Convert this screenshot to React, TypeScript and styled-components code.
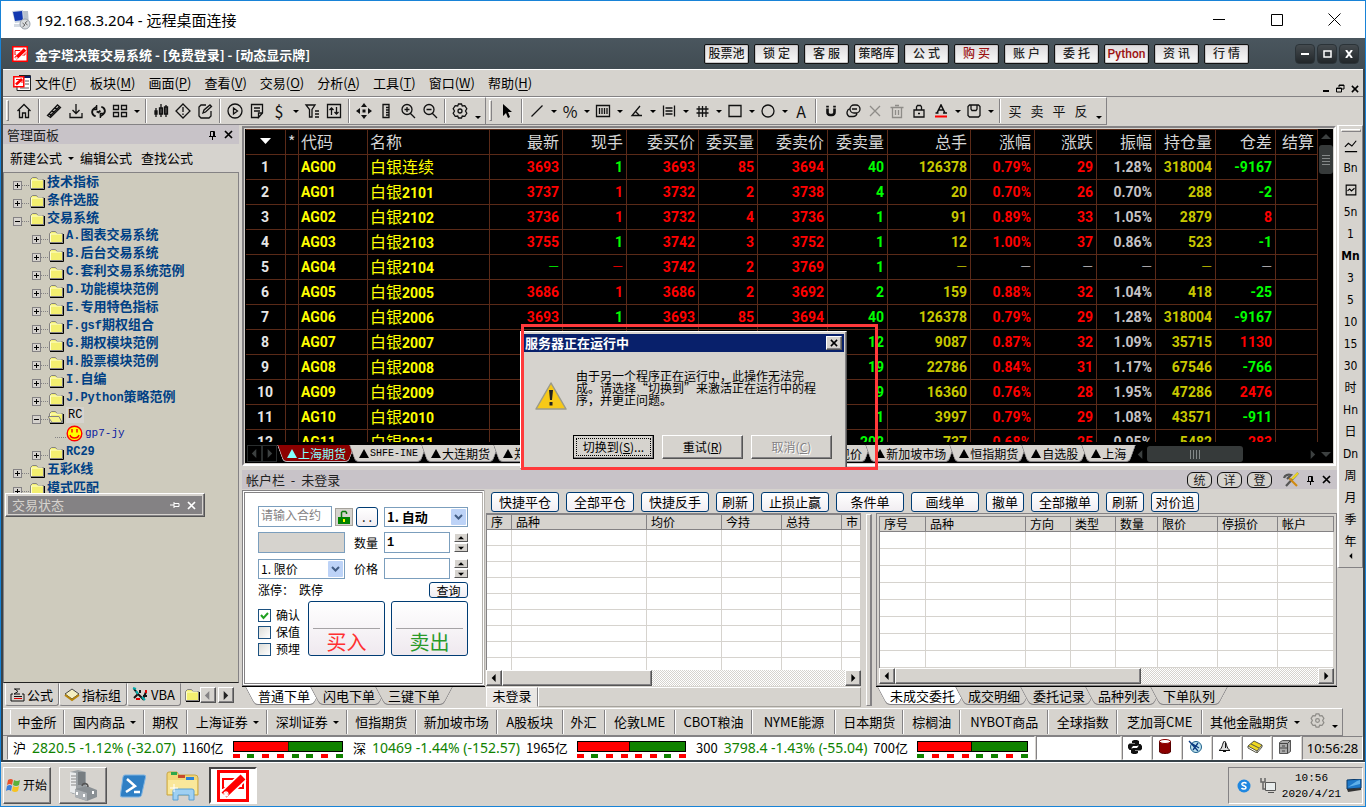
import React from 'react';
import styled, { createGlobalStyle, css } from 'styled-components';

const face = '#d6d3ce';
const cjk = '"Noto Sans CJK SC", sans-serif';

const GlobalStyle = createGlobalStyle`
  *, *::before, *::after { box-sizing: border-box; }
  body {
    margin: 0;
    background: ${face};
    color: #000;
    font: 13px/16px "Noto Sans", ${cjk};
  }
  button, input, select { font: inherit; color: inherit; margin: 0; }
  button { cursor: default; white-space: nowrap; }
  svg { display: block; flex: none; }
`;

const raised = css`
  border: 1px solid;
  border-color: #fff #555 #555 #fff;
  box-shadow: inset -1px -1px #848284;
  background: ${face};
`;
const sunken = css`
  border: 1px solid;
  border-color: #848284 #fff #fff #848284;
`;

/* ---------- window frame ---------- */
const Window = styled.div`
  position: relative;
  display: flex;
  flex-direction: column;
  height: 100vh;
  min-height: 700px;
  border: 1px solid #1883d7;
  overflow: hidden;
`;
const RemoteBar = styled.header`
  display: flex;
  align-items: center;
  flex: none;
  height: 37px;
  padding: 0 4px 0 10px;
  gap: 5px;
  background: #fff;
  font-size: 15px;
  line-height: 20px;
`;
const Grow = styled.div`flex: 1;`;
const RemoteButton = styled.button`
  display: flex;
  align-items: center;
  justify-content: center;
  width: 53px;
  height: 36px;
  border: 0;
  padding: 0;
  background: none;
`;
const AppBar = styled.div`
  display: flex;
  align-items: center;
  flex: none;
  height: 31px;
  padding: 0 6px 0 11px;
  background: linear-gradient(#4a565e, #414c53);
  color: #fff;
  font: bold 13px/16px ${cjk};
`;
const AppTitle = styled.h1`
  flex: 1;
  margin: 2px 0 0 7px;
  font: inherit;
  white-space: nowrap;
`;
const TopButtons = styled.nav`
  display: flex;
  gap: 5px;
  margin-right: 46px;
`;
const TopButton = styled.button<{ $red?: boolean }>`
  width: 45px;
  height: 20px;
  padding: 0;
  border: 1px solid #111;
  border-radius: 2px;
  background: linear-gradient(#dcdadc, #fafafa);
  box-shadow: inset 0 0 0 1px #c9c6c9;
  color: ${(p) => (p.$red ? '#9c1010' : '#222')};
  font: 500 12px/16px Roboto, ${cjk};
`;
const FrameButtons = styled.div`
  display: flex;
  gap: 2px;
`;
const FrameButton = styled.button`
  display: flex;
  align-items: center;
  justify-content: center;
  width: 20px;
  height: 20px;
  padding: 0;
  border: 1px solid #2b3338;
  border-radius: 4px;
  background: linear-gradient(#454b4f, #22272a);
`;
const AppBody = styled.div`
  flex: 1;
  min-height: 0;
  display: flex;
  flex-direction: column;
  border: solid #38434a;
  border-width: 0 2px 2px;
  background: ${face};
`;

/* ---------- menu and tool bars ---------- */
const MenuBar = styled.nav`
  display: flex;
  align-items: center;
  flex: none;
  height: 28px;
  gap: 4px;
  padding: 0 4px 0 10px;
  border-top: 1px solid #fff;
  border-bottom: 1px solid #848284;
  font-family: ${cjk};
`;
const MenuList = styled.div`
  display: flex;
  gap: 13px;
`;
const MenuItem = styled.button`
  padding: 0;
  border: 0;
  background: none;
  u { text-underline-offset: 2px; }
`;
const MdiButtons = styled.div`
  display: flex;
  align-self: flex-end;
  gap: 6px;
  padding-bottom: 3px;
`;
const Bare = styled.button`
  display: flex;
  align-items: center;
  justify-content: center;
  padding: 0;
  border: 0;
  background: none;
`;
const ToolBar = styled.div`
  display: flex;
  align-items: stretch;
  flex: none;
  height: 28px;
`;
const ToolGroup = styled.div`
  display: flex;
  align-items: center;
  padding-left: 10px;
  border: solid;
  border-width: 1px 1px 1px 0;
  border-color: #fff #848284 #848284;
  position: relative;
  &::before {
    content: '';
    position: absolute;
    left: 3px;
    top: 2px;
    bottom: 3px;
    width: 3px;
    border: 1px solid;
    border-color: #fff #848284 #848284 #fff;
  }
`;
const Tool = styled.button<{ $dim?: boolean }>`
  display: flex;
  align-items: center;
  justify-content: center;
  width: 22px;
  height: 22px;
  padding: 0;
  border: 0;
  background: none;
  color: ${(p) => (p.$dim ? '#8e8c88' : '#111')};
  font: 13px/16px ${cjk};
`;
const Drop = styled.button`
  display: flex;
  align-items: center;
  justify-content: center;
  width: 11px;
  height: 22px;
  padding: 0;
  border: 0;
  background: none;
  &::after {
    content: '';
    border: 3px solid transparent;
    border-top-color: #000;
    border-bottom: 0;
  }
`;
const LowDrop = styled(Drop)`
  align-items: flex-end;
  width: 14px;
  padding-bottom: 3px;
`;
const Rule = styled.div`
  width: 8px;
  align-self: stretch;
  margin: 1px 0;
  background: linear-gradient(90deg, transparent 3px, #848284 3px, #848284 4px, #fff 4px, #fff 5px, transparent 5px);
`;

/* ---------- work area ---------- */
const Work = styled.div`
  flex: 1;
  min-height: 0;
  display: flex;
`;
const Side = styled.aside`
  position: relative;
  display: flex;
  flex-direction: column;
  flex: none;
  width: 236px;
  margin-right: 3px;
`;
const PanelTitle = styled.div`
  display: flex;
  align-items: center;
  flex: none;
  height: 19px;
  padding: 0 4px;
  background: #c8c3c8;
  color: #222;
  font-family: ${cjk};
  h2 { flex: 1; margin: 0; font: inherit; white-space: pre; }
`;
const SideActions = styled.div`
  display: flex;
  align-items: center;
  flex: none;
  height: 28px;
  padding-left: 7px;
  font-family: ${cjk};
  button + button { margin-left: 9px; }
`;
const TinyDrop = styled.span`
  width: 17px;
  margin-right: -8px;
  display: flex;
  justify-content: center;
  &::after {
    content: '';
    border: 3px solid transparent;
    border-top-color: #000;
    border-bottom: 0;
  }
`;
const Tree = styled.ul`
  flex: 1;
  min-height: 0;
  margin: 0;
  padding: 0;
  overflow: hidden;
  list-style: none;
  background: #cecbbd;
  border: 1px solid;
  border-color: #848284 #848284 #222 #848284;
`;
const TreeRow = styled.li<{ $level: number }>`
  display: flex;
  align-items: center;
  height: 18px;
  padding: 0 0 2px ${(p) => 9 + p.$level * 19}px;
  color: #004084;
  font: bold 13px/16px ${cjk};
  white-space: nowrap;
`;
const Expander = styled.button`
  display: flex;
  align-items: center;
  justify-content: center;
  width: 9px;
  height: 9px;
  margin-top: 8px;
  padding: 0;
  border: 1px solid #848284;
  background: ${face};
`;
const Dots = styled.i`
  width: 7px;
  margin-top: 8px;
  border-top: 1px dotted #848284;
`;
const LeafDots = styled(Dots)`
  width: 11px;
  margin-left: 4px;
`;
const TreeIcon = styled.span`
  margin: 4px 2px 0 0;
`;
const Mono = styled.span`
  font-family: "Liberation Mono", monospace;
  font-size: 12px;
`;
const Picked = styled.span`
  padding: 0 2px;
  background: ${face};
  color: #000;
  font: 12px/16px "Liberation Mono", monospace;
`;
const Leaf = styled.span`
  margin-left: 2px;
  color: #0a1aa0;
  font: 11px/16px "Liberation Mono", monospace;
`;
const FloatPanel = styled.section`
  position: absolute;
  left: 2px;
  bottom: 190px;
  width: 200px;
  padding: 2px;
  ${raised}
  div { background: #848284; color: ${face}; height: 18px; }
`;
const FloatHead = styled.h2`
  color: ${face};
`;
const SideTabs = styled.div`
  display: flex;
  flex: none;
  height: 24px;
  padding-left: 2px;
`;
const SideTab = styled.button`
  display: flex;
  align-items: center;
  gap: 2px;
  height: 23px;
  padding: 0 5px 0 4px;
  background: ${face};
  border: 1px solid;
  border-color: transparent #848284 #848284 #fff;
  border-radius: 0 0 3px 3px;
  font-family: ${cjk};
`;
const SideFolder = styled(Bare)`
  margin-left: 3px;
`;
const SideNudge = styled.button`
  display: flex;
  align-items: center;
  justify-content: center;
  width: 16px;
  height: 16px;
  margin: 4px 2px 0 0;
  padding: 0;
  ${raised}
`;

const Center = styled.main`
  flex: 1;
  min-width: 0;
  display: flex;
  flex-direction: column;
`;
const QuoteFrame = styled.section`
  flex: 1;
  min-height: 0;
  display: flex;
  flex-direction: column;
  margin: 1px 1px 4px 0;
  border: 2px solid;
  border-color: #848284 #fff #fff #848284;
  background: #000;
  outline: 1px solid ${face};
  outline-offset: -3px;
  padding: 1px 1px 2px 2px;
`;
const QuoteMain = styled.div`
  flex: 1;
  min-height: 0;
  display: flex;
`;
const QuoteClip = styled.div`
  flex: 1;
  min-width: 0;
  margin-bottom: 3px;
  overflow: hidden;
`;
const QuoteTable = styled.table`
  width: 100%;
  table-layout: fixed;
  border-collapse: separate;
  border-spacing: 0;
  border-top: 1px solid #5a2a18;
  th, td {
    height: 25px;
    padding: 0 3px 0 2px;
    border: solid #5a2a18;
    border-width: 0 1px 1px 0;
    overflow: hidden;
    white-space: nowrap;
    text-align: right;
    vertical-align: middle;
    font: bold 14px/20px Roboto, ${cjk};
  }
  th { font: 16px/20px ${cjk}; color: #d6d6d6; padding-bottom: 2px; }
`;
const Cell = styled.td<{ $c: string; $left?: boolean; $mid?: boolean; $thin?: boolean }>`
  &&& {
    color: ${(p) => p.$c};
    ${(p) => p.$left && 'text-align: left;'}
    ${(p) => p.$mid && 'text-align: center;'}
    ${(p) => p.$thin && 'font-weight: 300;'}
  }
`;
const Big = styled.span`
  font: 16px/20px ${cjk};
`;
const HeadCell = styled.th<{ $left?: boolean; $mid?: boolean }>`
  &&& {
    ${(p) => p.$left && 'text-align: left;'}
    ${(p) => p.$mid && 'text-align: center;'}
  }
  svg { margin: 0 auto; }
`;
const DarkScroll = styled.div<{ $row?: boolean }>`
  display: flex;
  flex-direction: ${(p) => (p.$row ? 'row' : 'column')};
  align-items: center;
  flex: ${(p) => (p.$row ? '1' : 'none')};
  ${(p) => (p.$row ? 'height: 18px; margin-left: 4px;' : 'width: 15px;')}
  background: #000;
`;
const DarkArrow = styled.button`
  display: flex;
  align-items: center;
  justify-content: center;
  width: 14px;
  height: 16px;
  padding: 0;
  border: 0;
  background: #000;
`;
const DarkThumb = styled.div<{ $row?: boolean }>`
  display: flex;
  align-items: center;
  justify-content: center;
  ${(p) => (p.$row ? 'width: 96px; height: 16px;' : 'width: 14px; height: 29px;')}
  border-radius: 3px;
  background: #363a3a;
`;
const QuoteTabs = styled.div`
  display: flex;
  flex: none;
  height: 17px;
  padding-left: 1px;
`;
const Nudge = styled.button`
  display: flex;
  align-items: center;
  justify-content: center;
  width: 15px;
  height: 17px;
  padding: 0;
  border: 1px solid #2a2e2e;
  background: #000;
`;

/* A tab that is wider at its top edge than at its bottom edge. */
const SlantTab = styled.button<{ $bg: string; $line: string; $skew: number }>`
  position: relative;
  z-index: 0;
  display: flex;
  align-items: center;
  gap: 1px;
  flex: none;
  height: 100%;
  border: 0;
  background: none;
  &::before, &::after {
    content: '';
    position: absolute;
    z-index: -1;
    top: 0;
    bottom: 0;
    width: 51%;
    background: ${(p) => p.$bg};
    border-bottom: 1px solid ${(p) => p.$line};
  }
  &::before {
    left: 0;
    border-left: 1px solid ${(p) => p.$line};
    border-bottom-left-radius: 4px;
    transform: skewX(${(p) => p.$skew}deg);
    transform-origin: top;
  }
  &::after {
    right: 0;
    border-right: 1px solid ${(p) => p.$line};
    border-bottom-right-radius: 4px;
    transform: skewX(-${(p) => p.$skew}deg);
    transform-origin: top;
  }
`;
const QuoteTab = styled(SlantTab)<{ $on?: boolean }>`
  margin-right: -6px;
  padding: 0 9px 0 10px;
  color: ${(p) => (p.$on ? '#84ffff' : '#000')};
  font: 12px/16px ${cjk};
`;
const TabMono = styled.span`
  font: 10px/16px "Liberation Mono", monospace;
`;
const Strip = styled.div`
  flex: none;
  width: 26px;
  height: 443px;
  display: flex;
  flex-direction: column;
  align-items: center;
  padding-top: 9px;
  border: solid;
  border-width: 1px 1px 1px 2px;
  border-color: #fff #848284 #848284 #fff;
  &::before {
    content: '';
    position: absolute;
    width: 20px;
    height: 3px;
    margin-top: -6px;
    border: 1px solid;
    border-color: #fff #848284 #848284 #fff;
  }
`;
const StripButton = styled.button<{ $bold?: boolean }>`
  display: flex;
  align-items: center;
  justify-content: center;
  width: 22px;
  height: 22px;
  padding: 0;
  border: 0;
  background: none;
  font: ${(p) => (p.$bold ? 'bold' : 'normal')} 12px/16px "DejaVu Sans Condensed", ${cjk};
`;

/* ---------- account panel ---------- */
const Pill = styled.button`
  width: 25px;
  height: 16px;
  margin-right: 5px;
  padding: 0;
  border: 1px solid #111;
  border-radius: 6px;
  background: ${face};
  font: 12px/13px ${cjk};
`;
const TitleIcons = styled.div`
  display: flex;
  align-items: center;
  gap: 7px;
  padding: 0 2px 0 6px;
`;
const Lower = styled.div`
  display: flex;
  flex: none;
  height: 218px;
`;
const FormColumn = styled.div`
  display: flex;
  flex-direction: column;
  flex: none;
  width: 243px;
  padding-top: 1px;
`;
const OrderForm = styled.form`
  flex: 1;
  display: flex;
  flex-direction: column;
  gap: 5px;
  margin: 0;
  padding: 13px 14px 0 13px;
  background: #fff;
  border: 3px double #848284;
  border-right-color: #b5b2ad;
  font: 12px/16px ${cjk};
`;
const FormRow = styled.div`
  display: flex;
  align-items: center;
  height: 21px;
`;
const LimitRow = styled(FormRow)`
  gap: 5px;
  height: 12px;
`;
const Field = styled.input<{ $w: number; $bold?: boolean }>`
  width: ${(p) => p.$w}px;
  height: 21px;
  padding: 0 2px;
  border: 1px solid #7b9ebd;
  background: #fff;
  font: ${(p) => (p.$bold ? 'bold' : 'normal')} 12px/16px "Liberation Mono", ${cjk};
  &:disabled { background: ${face}; }
  &::placeholder { color: #848284; opacity: 1; }
`;
const FormLabel = styled.label`
  width: 30px;
  margin-left: 9px;
`;
const Pick = styled.span<{ $w: number }>`
  position: relative;
  width: ${(p) => p.$w}px;
  height: 20px;
  select {
    width: 100%;
    height: 20px;
    padding: 0 2px;
    border: 1px solid #7b9ebd;
    border-radius: 0;
    background: #fff;
    appearance: none;
    font: inherit;
  }
  svg { position: absolute; right: 2px; top: 2px; pointer-events: none; }
`;
const BoldPick = styled(Pick)`
  margin-left: auto;
  select { font: bold 13px/16px ${cjk}; }
`;
const LockButton = styled.button`
  display: flex;
  align-items: center;
  justify-content: center;
  width: 18px;
  height: 18px;
  margin: 0 3px;
  padding: 0;
  border: 1px solid #a5a29c;
  background: ${face};
`;
const Soft = styled.button<{ $w?: number; $h?: number }>`
  width: ${(p) => (p.$w ? `${p.$w}px` : 'auto')};
  height: ${(p) => p.$h || 20}px;
  padding: 0;
  border: 1px solid #003c74;
  border-radius: 3px;
  background: linear-gradient(#fff, #f1edf1);
  font: 13px/16px ${cjk};
`;
const Small = styled.span`
  display: block;
  font-size: 12px;
  line-height: 13px;
`;
const Spin = styled.span`
  display: flex;
  flex-direction: column;
  gap: 1px;
  margin-left: auto;
  button {
    display: flex;
    align-items: center;
    justify-content: center;
    width: 14px;
    height: 9px;
    padding: 0;
    ${raised}
    box-shadow: none;
  }
`;
const Checks = styled.div`
  display: flex;
  flex-direction: column;
  gap: 1px;
  width: 50px;
  padding-top: 6px;
  label { display: flex; align-items: center; gap: 5px; height: 16px; }
  input {
    appearance: none;
    width: 13px;
    height: 13px;
    border: 1px solid #1c5180;
    background: linear-gradient(135deg, #dcdcd7, #fff);
  }
  input:checked {
    background: #fff url("data:image/svg+xml,%3Csvg xmlns='http://www.w3.org/2000/svg' viewBox='0 0 11 11'%3E%3Cpath d='M2 5l2.5 3L9 3' fill='none' stroke='%2321a121' stroke-width='2'/%3E%3C/svg%3E");
  }
`;
const TradeRow = styled.div`
  display: flex;
  button + button { margin-left: 6px; }
`;
const TradeButton = styled.button<{ $c: string }>`
  width: 77px;
  height: 55px;
  padding: 26px 4px 0;
  border: 1px solid #003c74;
  border-radius: 3px;
  background: linear-gradient(#fff, #efe9ef);
  color: ${(p) => p.$c};
  font: 20px/26px ${cjk};
  span { display: block; border-top: 1px solid #a5a2a5; }
`;
const BottomTabs = styled.div<{ $inset: number }>`
  display: flex;
  flex: none;
  height: 21px;
  padding: 0 0 2px ${(p) => p.$inset}px;
  border-top: 1px solid #000;
`;
const BottomTab = styled(SlantTab)`
  margin-right: -13px;
  padding: 0 13px;
  font: 13px/16px ${cjk};
`;
const OrderTools = styled.div`
  display: flex;
  flex: none;
  gap: 7px;
  height: 24px;
  padding: 3px 0 0 5px;
`;
const Desk = styled.div`
  flex: 1;
  min-width: 0;
  display: flex;
  flex-direction: column;
  padding-left: 1px;
`;
const Books = styled.div`
  flex: 1;
  min-height: 0;
  display: flex;
`;
const Book = styled.div<{ $fixed?: number }>`
  display: flex;
  flex-direction: column;
  min-width: 0;
  flex: ${(p) => (p.$fixed ? `0 0 ${p.$fixed}px` : '1')};
`;
const BookFrame = styled.div<{ $deep?: boolean }>`
  flex: 1;
  min-height: 0;
  display: flex;
  flex-direction: column;
  border: solid #848284;
  border-width: ${(p) => (p.$deep ? '1px' : '1px 0 0')};
  padding: ${(p) => (p.$deep ? '2px 2px 1px' : '0')};
`;
const BookClip = styled.div`
  flex: 1;
  min-height: 0;
  overflow: hidden;
  background: #fff;
  border: solid #848284;
  border-width: 1px 0 0 1px;
`;
const BookTable = styled.table<{ $pitch: number }>`
  width: 100%;
  table-layout: fixed;
  border-collapse: separate;
  border-spacing: 0;
  font: 12px/14px ${cjk};
  th {
    height: 15px;
    padding: 0 0 0 4px;
    overflow: hidden;
    text-align: left;
    font-weight: normal;
    white-space: nowrap;
    background: ${face};
    border: solid #848284;
    border-width: 0 1px 1px 0;
  }
  td {
    height: ${(p) => p.$pitch}px;
    padding: 0;
    border: solid ${face};
    border-width: 0 1px 1px 0;
  }
`;
const ClassicScroll = styled.div`
  display: flex;
  flex: none;
  height: 16px;
  background: repeating-conic-gradient(#fff 0 25%, ${face} 0 50%) 0 0 / 2px 2px;
`;
const ScrollEnd = styled.button`
  display: flex;
  align-items: center;
  justify-content: center;
  width: 16px;
  height: 16px;
  padding: 0;
  ${raised}
`;
const ScrollThumb = styled.div<{ $share: number }>`
  flex: 0 0 ${(p) => p.$share}%;
  ${raised}
`;
const Splitter = styled.div`
  flex: none;
  width: 6px;
  margin: 1px 4px 1px 5px;
  border: 1px solid;
  border-color: #fff #848284 #848284 #fff;
  border-right-width: 2px;
`;
const LoginRow = styled.div`
  display: flex;
  flex: none;
  height: 21px;
  padding-top: 1px;
  font: 13px/16px ${cjk};
`;
const LoginTab = styled.button`
  width: 52px;
  padding: 0 0 3px;
  border: 1px solid;
  border-color: #fff #848284 transparent #fff;
  background: #e9e6e3;
`;
const LoginWell = styled.div`
  flex: 1;
  border: 1px solid;
  border-color: #fff #a5a29c #a5a29c #fff;
`;

/* ---------- market bar, status bar, task bar ---------- */
const MarketBar = styled.div`
  display: flex;
  flex: none;
  width: 1340px;
  max-width: 100%;
  height: 28px;
  margin-top: 1px;
  padding-left: 7px;
  border: solid;
  border-width: 1px 1px 1px 0;
  border-color: #fff #848284 #848284;
  font-family: ${cjk};
`;
const Market = styled.button<{ $w: number }>`
  display: flex;
  align-items: center;
  justify-content: center;
  flex: 0 1 ${(p) => p.$w}px;
  min-width: 0;
  margin: 1px 0;
  padding: 0;
  border: solid;
  border-width: 0 1px;
  border-color: transparent #848284 transparent #fff;
  background: none;
`;
const MarketDrop = styled(TinyDrop)`
  margin-right: -7px;
`;
const LastMarket = styled(Market).attrs({ $w: 104 })`
  border-right-color: transparent;
`;
const StatusBar = styled.footer`
  display: flex;
  flex: none;
  height: 24px;
  gap: 1px;
  padding: 0 0 0 4px;
`;
const StatusWell = styled.div<{ $w?: number }>`
  display: flex;
  align-items: center;
  flex: ${(p) => (p.$w ? `0 0 ${p.$w}px` : '1')};
  min-width: 0;
  overflow: hidden;
  background: #fff;
  ${sunken}
`;
const IndexItem = styled.div<{ $w: number }>`
  display: flex;
  align-items: center;
  flex: 0 0 ${(p) => p.$w}px;
  gap: 6px;
  padding: 0 5px;
  white-space: nowrap;
`;
const IndexQuote = styled.span`
  color: #108200;
  font-size: 14px;
`;
const Amount = styled.span`
  font: 13px/16px ${cjk};
`;
const Meter = styled.div`
  flex: 1;
  padding: 3px 0 0 3px;
`;
const MeterBar = styled.div<{ $red: number }>`
  height: 11px;
  border: 1px solid #000;
  background: linear-gradient(90deg, #f00 ${(p) => p.$red}%, #000 ${(p) => p.$red}%, #108200 ${(p) => p.$red + 1}%);
`;
const Ticks = styled.div`
  display: flex;
  justify-content: space-between;
  margin-top: 2px;
`;
const Tick = styled.i<{ $up: boolean }>`
  width: 7px;
  height: 4px;
  background: ${(p) => (p.$up ? '#f00' : '#108200')};
`;
const StatusIcon = styled.button`
  display: flex;
  align-items: center;
  justify-content: center;
  width: 29px;
  padding: 0 4px 3px 0;
  background: #fff;
  ${sunken}
`;
const Clock = styled.time`
  display: flex;
  align-items: center;
  justify-content: center;
  width: 61px;
  ${sunken}
  font-size: 13px;
`;
const TaskBar = styled.footer`
  display: flex;
  align-items: stretch;
  flex: none;
  height: 44px;
  padding: 4px 2px 2px;
  background: ${face};
  border-top: 1px solid #fff;
`;
const StartButton = styled.button`
  display: flex;
  align-items: center;
  gap: 1px;
  width: 48px;
  padding: 0 2px 2px;
  ${raised}
  font: 12px/16px ${cjk};
`;
const Task = styled.button<{ $look?: 'up' | 'down' }>`
  display: flex;
  align-items: center;
  justify-content: center;
  width: 48px;
  margin-left: 2px;
  padding: 0;
  border: 0;
  background: none;
  ${(p) => p.$look === 'up' && raised}
  ${(p) => p.$look === 'down' && css`${sunken} border-width: 2px; border-left-color: #444; border-top-color: #444; background: #fff;`}
`;
const FirstTask = styled(Task)`
  margin-left: 8px;
`;
const Tray = styled.div`
  display: flex;
  align-items: center;
  width: 135px;
  padding-left: 8px;
  ${sunken}
  time {
    flex: 1;
    text-align: center;
    font: 11px/16px "Liberation Mono", monospace;
  }
`;
const TrayNet = styled.svg`
  margin-left: 9px;
`;

/* ---------- dialog ---------- */
const Highlight = styled.div`
  position: absolute;
  left: 520px;
  top: 323px;
  width: 357px;
  height: 146px;
  border: 3px solid #ff393b;
  pointer-events: none;
`;
const Dialog = styled.section`
  position: absolute;
  left: 519px;
  top: 330px;
  width: 327px;
  height: 138px;
  padding: 2px;
  background: ${face};
  ${raised}
`;
const DialogTitle = styled.div`
  display: flex;
  align-items: center;
  height: 18px;
  padding: 0 2px;
  background: #08206b;
  color: #fff;
  h2 { flex: 1; margin: 0; font: bold 13px/16px ${cjk}; }
`;
const DialogClose = styled.button`
  display: flex;
  align-items: center;
  justify-content: center;
  width: 16px;
  height: 14px;
  padding: 0;
  ${raised}
`;
const DialogBody = styled.div`
  display: flex;
  gap: 9px;
  padding: 18px 0 0 12px;
  p { margin: 0; font: 12px/12px ${cjk}; white-space: nowrap; }
  svg { margin-top: 12px; }
`;
const DialogButtons = styled.div`
  display: flex;
  justify-content: flex-end;
  gap: 8px;
  margin: 25px 12px 0 0;
`;
const DialogButton = styled.button<{ $main?: boolean }>`
  width: 81px;
  height: 24px;
  padding: 0;
  ${raised}
  font: 12px/16px ${cjk};
  ${(p) => p.$main && 'outline: 1px dotted #000; outline-offset: -4px; border-color: #000;'}
  &:disabled { color: #848284; text-shadow: 1px 1px #fff; }
`;

/* ---------- drawings ---------- */
const strokes: Record<string, string> = {
  home: 'M1.500 8L8 1.500 14.500 8M3.500 7v7.500h3V10h3v4.500h3V7',
  pencil: 'M1.500 12.500l10-10.500 3 2.500-10 10zM4 13l9-9M3 10l2 3M6 7l2 3M9 4l2 3',
  down: 'M8 1v9M4.500 7L8 10.500 11.500 7M2 10v4.500h12V10',
  grid: 'M1.500 2.500h5v4h-5zM9.500 2.500h5v4h-5zM1.500 9.500h5v4h-5zM9.500 9.500h5v4h-5z',
  candle: 'M3 5v9M2 8h2v3H2zM8 1v13M6.500 5h3v6h-3zM13 2v12M11.500 4h3v7h-3z',
  diamond: 'M8 1l7 7-7 7-7-7zM8 4v5M8 10.500v1.500',
  edit: 'M9 2H4L2 4v9l2 2h8l2-2V8M6 10l1-3 6-5 1.500 1.500-6 5.500z',
  play: 'M8 1a7 7 0 100 14A7 7 0 008 1zM6.500 5l4 3-4 3z',
  note: 'M13.500 10V1.500h-11v13h7zl-4 4.500V10h4M5 5h6M5 8h6',
  filter: 'M2 2h9L8 6.500V14H5.500V6.500zM11 8h4M11 11h4M11 14h4',
  updown: 'M1.500 1.500h13v13h-13zM5.500 12V5M3.500 7l2-2 2 2M10.500 4v7M8.500 9l2 2 2-2',
  ruler: 'M5 1.500h6v13H5zM8 4.500h3M8 7h3M8 9.500h3M8 12h3',
  zoomin: 'M7 1.500a5 5 0 100 10 5 5 0 000-10zM10.500 10.500L15 15M4.500 6.500h5M7 4v5',
  zoomout: 'M7 1.500a5 5 0 100 10 5 5 0 000-10zM10.500 10.500L15 15M4.500 6.500h5',
  gear: 'M6.500 1h3l.8 2 2.500-.3 2 3L13.500 8l1.300 2.300-2 3-2.500-.3-.8 2h-3l-.8-2-2.500.3-2-3L2.500 8 1.200 5.700l2-3 2.500.3zM8 6a2 2 0 100 4 2 2 0 000-4z',
  line: 'M2.500 13.500l11-11',
  hatch: 'M1.500 2.500h13v11h-13zM4.500 5v6M7 5v6M9.500 5v6M12 5v6',
  angle: 'M12 3L4 12.500h10M7 8l4 4',
  lines: 'M2.500 2.500v11M13.500 2.500v11M4.500 5h7M4.500 8h7M4.500 11h7',
  hash: 'M5 3v11M8.500 3v11M12 3v11M2.500 6h12M2.500 10h12',
  rect: 'M2 2.500h12v11H2z',
  circle: 'M8 2a6 6 0 100 12A6 6 0 008 2z',
  overlap: 'M9 2a4 4 0 100 8h2a4 4 0 000-8zM5 5.500a4.500 4.500 0 00-1 8h4a4 4 0 004-3M7 6h5',
  cross: 'M3 3l10 10M13 3L3 13',
  trash: 'M3.500 4.500h9v10h-9zM1.500 4.500h13M6 2.500h4M6.500 7v5M9.500 7v5',
  lock: 'M3 7h10v7H3zM5.500 7V4l1-1.500h3l1 1.500v3M7 10.500h2',
  save: 'M3.500 2h9L14 3.500v9L12.500 14h-9L2 12.500v-9zM5 2v4l1 1.500h4L11 6V2',
  trend: 'M1 9l4-4 4 3 5-6M1 14.500h14',
  chart: 'M2.500 2.500h11v11h-11zM4 9l2.500-2 2 2L12 6',
};
const Glyph = ({ name, w = 1.3, size = 16 }: { name: string; w?: number; size?: number }) => (
  <svg width={size} height={size} viewBox="0 0 16 16" fill="none" stroke="currentColor" strokeWidth={w}>
    <path d={strokes[name]} />
  </svg>
);
const Special: Record<string, React.ReactElement> = {
  refresh: (
    <svg width="15" height="15" viewBox="0 0 16 16" fill="none" stroke="currentColor" strokeWidth="2">
      <path d="M5 13A4.500 4.500 0 013 5l3-2M11 3a4.500 4.500 0 012 8l-3 2M10 7L8 9 6 8" />
      <path d="M6 1v5H2M10 15v-5h4" strokeWidth="1.500" />
    </svg>
  ),
  move: (
    <svg width="16" height="16" viewBox="0 0 16 16" fill="currentColor">
      <path d="M8 0l3 4H5zM8 16l3-4H5zM0 8l4-3v6zM16 8l-4-3v6zM6.500 6.500h3v3h-3z" />
    </svg>
  ),
  cursor: (
    <svg width="16" height="16" viewBox="0 0 16 16" fill="#000">
      <path d="M4 1v12l3-3 2 5 2-1-2-5h4z" />
    </svg>
  ),
  magnet: (
    <svg width="14" height="16" viewBox="0 0 16 16" fill="none" stroke="#111" strokeWidth="3">
      <path d="M4 5v4a3 3 0 003 3.500h2A3 3 0 0012 9V5M4 2v2M12 2v2" />
    </svg>
  ),
};
const Logo = ({ size }: { size: number }) => (
  <svg width={size} height={size} viewBox="0 0 32 32">
    <path fill="#f00" d="M0 0h32v32H0z" />
    <path fill="#fff" d="M3 3h26v26H3z" />
    <path fill="none" stroke="#f00" strokeWidth="2" d="M6 9h20v9H6z" />
    <path stroke="#fff" strokeWidth="10" d="M7 25L26 7" />
    <path stroke="#f00" strokeWidth="7" d="M7 25L26 7" />
    <path stroke="#fff" strokeWidth="1.200" d="M6 24h6M9 21v6M7 22l4 4M11 22l-4 4" />
  </svg>
);
const Pin = ({ c = '#000' }: { c?: string }) => (
  <svg width="9" height="10" viewBox="0 0 9 10" fill="none" stroke={c}>
    <path d="M2.500 6V1.500h4V6M5.500 1v5M1 6.500h7M4.500 7v3" />
  </svg>
);
const Ex = ({ c = '#000', size = 9 }: { c?: string; size?: number }) => (
  <svg width={size} height={size} viewBox="0 0 9 9" stroke={c} strokeWidth="1.700">
    <path d="M1 1l7 7M8 1L1 8" />
  </svg>
);
const Tri = ({ dir, c = '#000', size = 6 }: { dir: 'l' | 'r' | 'u' | 'd'; c?: string; size?: number }) => {
  const d = { l: 'M7 0v10L2 5z', r: 'M3 0v10l5-5z', u: 'M0 7h10L5 2z', d: 'M0 3h10L5 8z' }[dir];
  return (
    <svg width={size} height={size} viewBox="0 0 10 10" fill={c}>
      <path d={d} />
    </svg>
  );
};
const TabMark = () => (
  <svg width="10" height="9" viewBox="0 0 10 9" fill="currentColor">
    <path d="M0 9h10L5 0z" />
  </svg>
);
const Folder = ({ open }: { open?: boolean }) => (
  <svg width="16" height="14" viewBox="0 0 16 14">
    <path d="M1.500 12.500v-9l2-2h4l1.500 2h5.500v9z" fill="#f3ef70" stroke="#848284" />
    <path d="M2.500 12V4h11" stroke="#ffffd0" fill="none" />
    <path d="M2 13.500h13.500V4" stroke="#000" fill="none" />
    {open && <path d="M0 6.500h11l3 6H4z" fill="#f6f38a" stroke="#848284" />}
  </svg>
);
const Smile = () => (
  <svg width="17" height="17" viewBox="0 0 17 17">
    <circle cx="8.500" cy="8.500" r="7.300" fill="#ff0" stroke="#f00" strokeWidth="1.400" />
    <path d="M6 4v3.500M11 4v3.500M4 10c1 4 8 4 9 0" fill="none" stroke="#f00" strokeWidth="1.400" />
  </svg>
);
const ComboArrow = () => (
  <svg width="15" height="16" viewBox="0 0 15 16">
    <rect width="15" height="16" rx="1" fill="#bdd3f7" />
    <path d="M4 6l3.500 3.500L11 6" fill="none" stroke="#425d84" strokeWidth="2" />
  </svg>
);

/* ---------- data ---------- */
const R = '#ff0000';
const G = '#00ff00';
const Y = '#c8c800';
const W = '#c6c3c6';
const columns: [string, number | undefined][] = [
  ['代码', 69], ['名称', 122], ['最新', 73], ['现手', 64], ['委买价', 72], ['委买量', 59], ['委卖价', 70],
  ['委卖量', 60], ['总手', 83], ['涨幅', 64], ['涨跌', 62], ['振幅', 59], ['持仓量', 60], ['仓差', 60], ['结算', undefined],
];
const quotes: string[] = [
  'AG00|连续|3693|+1|3693|85|3694|40|126378|0.79%|29|1.28%|318004|-9167',
  'AG01|2101|3737|1|3732|2|3738|4|20|0.70%|26|0.70%|288|-2',
  'AG02|2102|3736|1|3732|4|3736|1|91|0.89%|33|1.05%|2879|8',
  'AG03|2103|3755|+1|3742|3|3752|1|12|1.00%|37|0.86%|523|-1',
  'AG04|2104|+—|—|3742|2|3769|1|—|—|—|—|—|—',
  'AG05|2005|3686|1|3686|2|3692|2|159|0.88%|32|1.04%|418|-25',
  'AG06|2006|3693|+1|3693|85|3694|40|126378|0.79%|29|1.28%|318004|-9167',
  'AG07|2007||||||12|9087|0.87%|32|1.09%|35715|1130',
  'AG08|2008||||||19|22786|0.84%|31|1.17%|67546|-766',
  'AG09|2009||||||9|16360|0.76%|28|1.95%|47286|2476',
  'AG10|2010||||||1|3997|0.79%|29|1.08%|43571|-911',
  'AG11|2011||||||202|737|0.68%|25|0.95%|5482|283',
];
const colourOf = (i: number, v: string) => {
  if (v === '—' && i > 8) return i === 12 ? Y : W;
  if (i === 7) return G;
  if (i === 8 || i === 12) return Y;
  if (i === 11) return W;
  if (i === 13) return v.startsWith('-') ? G : R;
  return v.startsWith('+') ? G : R;
};
const quoteTabs = ['上海期货', 'SHFE-INE', '大连期货', '郑州期货', '中金所指数', '国内期权', '国内商品', '上海现价', '新加坡市场', '恒指期货', '自选股', '上海'];
const tree: [number, string, string][] = [
  [0, '+', '技术指标'], [0, '+', '条件选股'], [0, '-', '交易系统'],
  [1, '+', 'A.图表交易系统'], [1, '+', 'B.后台交易系统'], [1, '+', 'C.套利交易系统范例'], [1, '+', 'D.功能模块范例'],
  [1, '+', 'E.专用特色指标'], [1, '+', 'F.gsf期权组合'], [1, '+', 'G.期权模块范例'], [1, '+', 'H.股票模块范例'],
  [1, '+', 'I.自编'], [1, '+', 'J.Python策略范例'], [1, 'open', 'RC'], [2, 'leaf', 'gp7-jy'], [1, '+', 'RC29'],
  [0, '+', '五彩K线'], [0, '+', '模式匹配'],
];
const menus = ['文件F', '板块M', '画面P', '查看V', '交易O', '分析A', '工具T', '窗口W', '帮助H'];
const topButtons = ['股票池', '锁 定', '客 服', '策略库', '公 式', '购 买', '账 户', '委 托', 'Python', '资 讯', '行 情'];
const mainTools = 'home | pencil down refresh grid v | candle diamond edit | play note $ v filter updown | move ruler zoomin zoomout | gear V'.split(' ');
const drawTools = 'cursor | line v % v hatch v angle v lines v hash v rect v circle v A | magnet overlap cross trash lock fontA v save v | 买 卖 平 反 V'.split(' ');
const strip = ['trend', 'Bn', 'chart', '5n', '1', 'Mn', '3', '5', '10', '15', '30', '时', 'Hn', '日', 'Dn', '周', '月', '季', '年'];
const markets: [string, number, boolean?][] = [
  ['中金所', 54], ['国内商品', 80, true], ['期权', 43], ['上海证券', 80, true], ['深圳证券', 80, true], ['恒指期货', 69],
  ['新加坡市场', 81], ['A股板块', 66], ['外汇', 42], ['伦敦LME', 70], ['CBOT粮油', 78], ['NYME能源', 83], ['日本期货', 68],
  ['棕榈油', 57], ['NYBOT商品', 88], ['全球指数', 69], ['芝加哥CME', 85],
];
const orderButtons: [string, number][] = [
  ['快捷平仓', 68], ['全部平仓', 68], ['快捷反手', 68], ['刷新', 38], ['止损止赢', 68], ['条件单', 68], ['画线单', 68],
  ['撤单', 38], ['全部撤单', 68], ['刷新', 38], ['对价追', 48],
];

const splitLatin = (text: string) =>
  text.split(/([\x20-\x7e]+)/).filter(Boolean).map((part, i) => (/^[\x20-\x7e]/.test(part) ? <Mono key={i}>{part}</Mono> : part));

const Tools = ({ items }: { items: string[] }) => (
  <>
    {items.map((t, i) => {
      if (t === '|') return <Rule key={i} />;
      if (t === 'v') return <Drop key={i} aria-label="more" />;
      if (t === 'V') return <LowDrop key={i} aria-label="options" />;
      if (t === 'fontA')
        return (
          <Tool key={i} aria-label="text colour">
            <svg width="14" height="14" viewBox="0 0 14 14">
              <path d="M3 9l4-8 4 8M5 6h4M1.500 9h3M9 9h4" stroke="#111" strokeWidth="1.600" fill="none" />
              <path d="M1 11.500h12v2H1z" fill="#f00" />
            </svg>
          </Tool>
        );
      return (
        <Tool key={i} aria-label={t} $dim={t === 'cross' || t === 'trash'}>
          {Special[t] || (strokes[t] ? <Glyph name={t} size={16} /> : t === '$' || t === '%' || t === 'A' ? <Big>{t}</Big> : t)}
        </Tool>
      );
    })}
  </>
);

const Scroll = ({ share }: { share: number }) => (
  <ClassicScroll>
    <ScrollEnd aria-label="scroll left"><Tri dir="l" size={8} /></ScrollEnd>
    <ScrollThumb $share={share} />
    <Grow />
    <ScrollEnd aria-label="scroll right"><Tri dir="r" size={8} /></ScrollEnd>
  </ClassicScroll>
);

const BookGrid = ({ cols, rows, pitch }: { cols: [string, number?][]; rows: number; pitch: number }) => (
  <BookClip>
    <BookTable $pitch={pitch}>
      <colgroup>{cols.map(([, w], i) => <col key={i} width={w} />)}</colgroup>
      <thead><tr>{cols.map(([c], i) => <th key={i}>{c}</th>)}</tr></thead>
      <tbody>
        {Array.from({ length: rows }, (_, r) => (
          <tr key={r}>{cols.map((_, i) => <td key={i} />)}</tr>
        ))}
      </tbody>
    </BookTable>
  </BookClip>
);

const SlantTabs = ({ names, inset }: { names: string[]; inset: number }) => (
  <BottomTabs $inset={inset}>
    {names.map((n, i) => (
      <BottomTab key={n} $bg={i === 0 ? '#fff' : face} $line="#848284" $skew={28}>{n}</BottomTab>
    ))}
  </BottomTabs>
);

const Index = ({ name, quote, amount, w, red, ticks }: { name: string; quote: string; amount: string; w: number; red: number; ticks: string }) => (
  <IndexItem $w={w}>
    <Amount>{name}</Amount>
    <IndexQuote>{quote}</IndexQuote>
    <Amount>{amount}</Amount>
    <Meter>
      <MeterBar $red={red} />
      <Ticks>{ticks.split('').map((t, i) => <Tick key={i} $up={t === 'r'} />)}</Ticks>
    </Meter>
  </IndexItem>
);

const Spinner = () => (
  <Spin>
    <button type="button" aria-label="up"><Tri dir="u" /></button>
    <button type="button" aria-label="down"><Tri dir="d" /></button>
  </Spin>
);

export default function App() {
  return (
    <Window>
      <GlobalStyle />
      <RemoteBar>
        <svg width="20" height="20" viewBox="0 0 20 20">
          <path d="M1 1l11-1 1 12-9 1z" fill="#c9d3e0" />
          <path d="M2 2l9-1 1 9-8 1z" fill="#1238b0" />
          <path d="M12 1h5l1 14-5 3z" fill="#b6c0cc" />
          <path d="M3 14h8v3H3z" fill="#d4dae2" />
          <circle cx="14" cy="14" r="5" fill="#d9dcdf" stroke="#9aa2ab" />
          <path d="M11.500 13l2.500 2-2.500 2M16.500 11L14 13l2.500 2" fill="none" stroke="#666" />
        </svg>
        <span>192.168.3.204 - 远程桌面连接</span>
        <Grow />
        <RemoteButton aria-label="minimize"><svg width="12" height="12" stroke="#000"><path d="M0 5.500h12" /></svg></RemoteButton>
        <RemoteButton aria-label="maximize"><svg width="12" height="12" stroke="#000" fill="none"><path d="M.5.5h11v11H.5z" /></svg></RemoteButton>
        <RemoteButton aria-label="close"><svg width="13" height="13" stroke="#000"><path d="M.5.5l12 12M12.500.5l-12 12" /></svg></RemoteButton>
      </RemoteBar>
      <AppBar>
        <Logo size={16} />
        <AppTitle>金字塔决策交易系统 - [免费登录] - [动态显示牌]</AppTitle>
        <TopButtons>
          {topButtons.map((b) => <TopButton key={b} $red={b === '购 买' || b === 'Python'}>{b}</TopButton>)}
        </TopButtons>
        <FrameButtons>
          <FrameButton aria-label="minimize"><svg width="8" height="8"><path d="M0 3h8v2H0z" fill="#fff" /></svg></FrameButton>
          <FrameButton aria-label="restore"><svg width="9" height="8" fill="none" stroke="#fff" strokeWidth="1.500"><path d="M1 1h7v6H1z" /></svg></FrameButton>
          <FrameButton aria-label="close"><svg width="8" height="8" stroke="#fff" strokeWidth="2"><path d="M1 0l6 8M7 0L1 8" /></svg></FrameButton>
        </FrameButtons>
      </AppBar>
      <AppBody>
        <MenuBar>
          <svg width="18" height="16" viewBox="0 0 18 16">
            <path d="M6 .5h11.500v15H4V12" fill="#fff" stroke="#222" />
            <path d="M11 1h6.500v2H11z" fill="#08206b" />
            <path d="M12 6h4M12 9h4M7 13h9" stroke="#555" />
            <path d="M.8 1.800h10v10H.8z" fill="#fff" stroke="#f00" strokeWidth="1.500" />
            <path d="M3 4.500h6V8" stroke="#f00" fill="none" />
            <path d="M3 9.500L9 4" stroke="#f00" strokeWidth="2.500" />
          </svg>
          <MenuList>
            {menus.map((m) => (
              <MenuItem key={m}>{m.slice(0, 2)}(<u>{m[2]}</u>)</MenuItem>
            ))}
          </MenuList>
          <Grow />
          <MdiButtons>
            <Bare aria-label="minimize child"><svg width="7" height="9"><path d="M0 6h6v2H0z" /></svg></Bare>
            <Bare aria-label="restore child"><svg width="9" height="9" fill="none" stroke="#000"><path d="M3 3V1h5v4H6M.5 4h5v4h-5zM3 1.500h5M.5 4.500h5" /></svg></Bare>
            <Bare aria-label="close child"><Ex size={8} /></Bare>
          </MdiButtons>
        </MenuBar>
        <ToolBar>
          <ToolGroup><Tools items={mainTools} /></ToolGroup>
          <ToolGroup><Tools items={drawTools} /></ToolGroup>
        </ToolBar>
        <Work>
          <Side>
            <PanelTitle>
              <h2>管理面板</h2>
              <TitleIcons><Bare aria-label="pin"><Pin /></Bare><Bare aria-label="close panel"><Ex /></Bare></TitleIcons>
            </PanelTitle>
            <SideActions>
              <Bare>新建公式<TinyDrop /></Bare>
              <Bare>编辑公式</Bare>
              <Bare>查找公式</Bare>
            </SideActions>
            <Tree>
              {tree.map(([level, kind, name]) => (
                <TreeRow key={name} $level={level}>
                  {kind === 'leaf' ? (
                    <><LeafDots /><Smile /><Leaf>{name}</Leaf></>
                  ) : (
                    <>
                      <Expander aria-label={`toggle ${name}`}>
                        <svg width="5" height="5" stroke="#000"><path d={kind === '+' ? 'M0 2.500h5M2.500 0v5' : 'M0 2.500h5'} /></svg>
                      </Expander>
                      <Dots />
                      <TreeIcon><Folder open={kind === 'open'} /></TreeIcon>
                      {kind === 'open' ? <Picked>{name}</Picked> : <span>{splitLatin(name)}</span>}
                    </>
                  )}
                </TreeRow>
              ))}
            </Tree>
            <SideTabs>
              <SideTab>
                <svg width="15" height="14" viewBox="0 0 15 14" fill="none" stroke="#111"><path d="M3 6H1v7h13V6h-2M4 1h6M5 1l3 2.500L4 6h6M4 8.500h8" /><path d="M4 10.500h8" stroke="#d00" /></svg>
                公式
              </SideTab>
              <SideTab>
                <svg width="16" height="14" viewBox="0 0 16 14"><path d="M1 6l7-5 7 5-7 5z" fill="#f4efc0" stroke="#444" /><path d="M1 7l7 5 7-5" fill="none" stroke="#b8860b" strokeWidth="2" /></svg>
                指标组
              </SideTab>
              <SideTab>
                <svg width="17" height="15" viewBox="0 0 17 15" fill="none" stroke="#111" strokeWidth="2"><path d="M2 2l4 5-4 4M6 7l5 5 3-7M8 3v3M11 9h4" /><path d="M1 1l3 1M10 10l3 3M4 4l2 3" stroke="#0aa" /><path d="M14 3v3M4 12h4" stroke="#d00" /></svg>
                VBA
              </SideTab>
              <SideFolder aria-label="folders"><Folder /></SideFolder>
              <SideNudge aria-label="previous tab"><Tri dir="l" c="#848284" size={9} /></SideNudge>
              <SideNudge aria-label="next tab"><Tri dir="r" c="#222" size={9} /></SideNudge>
            </SideTabs>
            <FloatPanel>
              <PanelTitle>
                <FloatHead>交易状态</FloatHead>
                <TitleIcons>
                  <Bare aria-label="dock"><svg width="10" height="8" fill="none" stroke="#fff"><path d="M0 4h4M4 1v6M4 2.500h5v3H4" /></svg></Bare>
                  <Bare aria-label="close status"><Ex c="#fff" /></Bare>
                </TitleIcons>
              </PanelTitle>
            </FloatPanel>
          </Side>
          <Center>
            <QuoteFrame>
              <QuoteMain>
                <QuoteClip>
                  <QuoteTable>
                    <colgroup>
                      <col width={40} />
                      <col width={13} />
                      {columns.map(([c, w]) => <col key={c} width={w} />)}
                    </colgroup>
                    <thead>
                      <tr>
                        <HeadCell $mid>
                          <svg width="11" height="6" aria-hidden="true"><path d="M0 0h11L5.500 6z" fill="#fff" /></svg>
                        </HeadCell>
                        <HeadCell $left>*</HeadCell>
                        {columns.map(([c], i) => <HeadCell key={c} $left={i < 2}>{c}</HeadCell>)}
                      </tr>
                    </thead>
                    <tbody>
                      {quotes.map((q, r) => {
                        const v = q.split('|');
                        return (
                          <tr key={v[0]}>
                            <Cell $c="#e6e6e6" $mid>{r + 1}</Cell>
                            <Cell $c={W} />
                            <Cell $c="#ffff00" $left>{v[0]}</Cell>
                            <Cell $c="#ffff00" $left>
                              {v[1] === '连续' ? <Big>白银连续</Big> : <><Big>白银</Big>{v[1]}</>}
                            </Cell>
                            {v.slice(2).map((x, i) => (
                              <Cell key={i} $c={colourOf(i + 2, x)} $thin={x.endsWith('—')}>{x.replace('+', '')}</Cell>
                            ))}
                            <Cell $c={W} />
                          </tr>
                        );
                      })}
                    </tbody>
                  </QuoteTable>
                </QuoteClip>
                <DarkScroll>
                  <DarkArrow aria-label="scroll up"><Tri dir="u" c="#3c4040" size={10} /></DarkArrow>
                  <DarkThumb><svg width="8" height="12" stroke="#848888"><path d="M0 1.500h8M0 4.500h8M0 7.500h8M0 10.500h8" /></svg></DarkThumb>
                </DarkScroll>
              </QuoteMain>
              <QuoteTabs>
                <Nudge aria-label="first"><Tri dir="l" c="#3c4040" size={9} /></Nudge>
                <Nudge aria-label="last"><Tri dir="r" c="#3c4040" size={9} /></Nudge>
                {quoteTabs.map((t, i) => (
                  <QuoteTab key={t} $on={i === 0} $bg={i === 0 ? '#8c0000' : face} $line={i === 0 ? '#c6c3c6' : '#848284'} $skew={20}>
                    <TabMark />
                    {t === 'SHFE-INE' ? <TabMono>{t}</TabMono> : <span>{t}</span>}
                  </QuoteTab>
                ))}
                <DarkScroll $row>
                  <DarkArrow aria-label="scroll left"><Tri dir="l" c="#3c4040" size={9} /></DarkArrow>
                  <DarkThumb $row><svg width="12" height="9" stroke="#848888"><path d="M1.500 0v9M4.500 0v9M7.500 0v9M10.500 0v9" /></svg></DarkThumb>
                  <Grow />
                  <DarkArrow aria-label="scroll right"><Tri dir="r" c="#3c4040" size={9} /></DarkArrow>
                  <DarkArrow aria-label="scroll down"><Tri dir="d" c="#3c4040" size={10} /></DarkArrow>
                </DarkScroll>
              </QuoteTabs>
            </QuoteFrame>
            <PanelTitle>
              <h2>帐户栏  -  未登录</h2>
              <Pill>统</Pill><Pill>详</Pill><Pill>登</Pill>
              <TitleIcons>
                <Bare aria-label="settings">
                  <svg width="16" height="15" viewBox="0 0 16 15" fill="none" strokeWidth="2.200">
                    <path d="M15 1L3 14" stroke="#555" /><path d="M15 1L9 7" stroke="#f0d820" /><path d="M6 6l8 8" stroke="#d08a10" /><path d="M1 6c1-3 4-4 7-3L4 7" stroke="#555" />
                  </svg>
                </Bare>
                <Bare aria-label="pin account"><Pin /></Bare>
                <Bare aria-label="close account"><Ex /></Bare>
              </TitleIcons>
            </PanelTitle>
            <Lower>
              <FormColumn>
                <OrderForm>
                  <FormRow>
                    <Field $w={74} placeholder="请输入合约" aria-label="合约" />
                    <LockButton type="button" aria-label="unlock">
                      <svg width="12" height="14" viewBox="0 0 12 14"><path d="M3.500 7V2.500l1-1h3l1 1V4" fill="none" stroke="#0a7a0a" strokeWidth="1.500" /><path d="M0 7h12v7H0z" fill="#008200" /><path d="M5 9h2v3H5z" fill="#ff0" /></svg>
                    </LockButton>
                    <Soft type="button" $w={22}>. .</Soft>
                    <BoldPick $w={84}>
                      <select aria-label="开平"><option>1. 自动</option></select><ComboArrow />
                    </BoldPick>
                  </FormRow>
                  <FormRow>
                    <Field $w={87} disabled aria-label="名称" />
                    <FormLabel htmlFor="qty">数量</FormLabel>
                    <Field $w={66} $bold id="qty" defaultValue="1" />
                    <Spinner />
                  </FormRow>
                  <FormRow>
                    <Pick $w={87}><select aria-label="类型"><option>1. 限价</option></select><ComboArrow /></Pick>
                    <FormLabel htmlFor="price">价格</FormLabel>
                    <Field $w={66} id="price" />
                    <Spinner />
                  </FormRow>
                  <LimitRow>
                    <span>涨停：</span><span>跌停</span><Grow />
                    <Soft type="button" $w={39} $h={16}><Small>查询</Small></Soft>
                  </LimitRow>
                  <TradeRow>
                    <Checks>
                      <label><input type="checkbox" defaultChecked />确认</label>
                      <label><input type="checkbox" />保值</label>
                      <label><input type="checkbox" />预埋</label>
                    </Checks>
                    <TradeButton type="button" $c="#ff3031"><span>买入</span></TradeButton>
                    <TradeButton type="button" $c="#299a29"><span>卖出</span></TradeButton>
                  </TradeRow>
                </OrderForm>
                <SlantTabs inset={3} names={['普通下单', '闪电下单', '三键下单']} />
              </FormColumn>
              <Desk>
                <OrderTools>
                  {orderButtons.map(([b, w], i) => <Soft key={i} $w={w}>{b}</Soft>)}
                </OrderTools>
                <Books>
                  <Book $fixed={375}>
                    <BookFrame>
                      <BookGrid pitch={16} rows={10} cols={[['序', 25], ['品种', 135], ['均价', 75], ['今持', 60], ['总持', 60], ['市', undefined]]} />
                      <Scroll share={40} />
                    </BookFrame>
                    <LoginRow><LoginTab>未登录</LoginTab><LoginWell /></LoginRow>
                  </Book>
                  <Splitter />
                  <Book>
                    <BookFrame $deep>
                      <BookGrid pitch={17} rows={9} cols={[['序号', 46], ['品种', 100], ['方向', 45], ['类型', 45], ['数量', 42], ['限价', 60], ['停损价', 60], ['帐户', undefined]]} />
                      <Scroll share={54} />
                    </BookFrame>
                    <SlantTabs inset={1} names={['未成交委托', '成交明细', '委托记录', '品种列表', '下单队列']} />
                  </Book>
                </Books>
              </Desk>
            </Lower>
          </Center>
          <Strip>
            {strip.map((s, i) => (
              <StripButton key={i} aria-label={s} $bold={s === 'Mn'}>{strokes[s] ? <Glyph name={s} size={14} /> : s}</StripButton>
            ))}
            <Tri dir="l" size={6} />
          </Strip>
        </Work>
        <MarketBar>
          {markets.map(([m, w, drop]) => (
            <Market key={m} $w={w}>{m}{drop && <MarketDrop />}</Market>
          ))}
          <LastMarket>其他金融期货<MarketDrop /></LastMarket>
          <Tool aria-label="market settings" $dim><Glyph name="gear" size={15} /></Tool>
          <LowDrop aria-label="more markets" />
        </MarketBar>
        <StatusBar>
          <StatusWell $w={1028}>
            <Index name="沪" quote="2820.5 -1.12% (-32.07)" amount="1160亿" w={340} red={50} ticks="rgrrggrg" />
            <Index name="深" quote="10469 -1.44% (-152.57)" amount="1965亿" w={343} red={48} ticks="rgrrrrgr" />
            <Index name="300" quote="3798.4 -1.43% (-55.04)" amount="700亿" w={342} red={49} ticks="grrrggrg" />
          </StatusWell>
          <StatusWell />
          <StatusIcon aria-label="python">
            <svg width="14" height="14" viewBox="0 0 14 14" fill="#111"><path d="M4 1l2-1h3l2 1v4L9 6H5L3.500 8v2H1.500L0 8V5l1.500-1.500H7V3H4zM10 13l-2 1H5l-2-1V9l2-1h4l1.500-2V4h2L14 6v3l-1.500 1.500H7v.5h3z" /></svg>
          </StatusIcon>
          <StatusIcon aria-label="database">
            <svg width="12" height="15" viewBox="0 0 12 15"><path d="M.5 2v11c2 2 9 2 11 0V2z" fill="#8c0000" stroke="#500" /><ellipse cx="6" cy="2.500" rx="5.500" ry="2" fill="#fff" stroke="#8c0000" /></svg>
          </StatusIcon>
          <StatusIcon aria-label="network">
            <svg width="14" height="14" viewBox="0 0 14 14" fill="none"><circle cx="8" cy="7" r="5.500" fill="#bfe3ee" stroke="#1b5f8a" /><path d="M1 1l9 10M10 3L5 10M3 3l8 5" stroke="#0a3a80" strokeWidth="1.300" /></svg>
          </StatusIcon>
          <StatusIcon aria-label="alerts">
            <svg width="13" height="13" viewBox="0 0 13 13"><path d="M6.500 1C4 3 5 8 1 10.500h11C8 8 9 3 6.500 1z" fill="#ddd" stroke="#111" /><path d="M5 11.500h3M7.500 3v5" stroke="#111" /></svg>
          </StatusIcon>
          <StatusIcon aria-label="cards">
            <svg width="16" height="13" viewBox="0 0 16 13"><path d="M1 6l6-5 8 4-5 6z" fill="#f0d820" stroke="#554" /><path d="M1 6v2l9 5v-2M10 13l5-6V5M4 4l8 4" fill="none" stroke="#554" /></svg>
          </StatusIcon>
          <StatusIcon aria-label="storage">
            <svg width="12" height="14" viewBox="0 0 12 14"><path d="M.5 2.500l3-2h8v11l-3 2h-8z" fill="#aaa" stroke="#555" /><path d="M.5 3.500h8v10M8.500 3.500l3-3M1 8h7M3 6h3M3 11h3" fill="none" stroke="#444" /></svg>
          </StatusIcon>
          <Clock>10:56:28</Clock>
        </StatusBar>
      </AppBody>
      <TaskBar>
        <StartButton>
          <svg width="16" height="16" viewBox="0 0 16 16"><path d="M2 3q3-2 5 0L6 8Q4 6 1 8z" fill="#e8502a" /><path d="M8 3q3 2 6 0l-1 5q-3 2-6 0z" fill="#5cb13b" /><path d="M1 9q3-2 5 0l-1 5q-2-2-5 0z" fill="#3d7fdc" /><path d="M7 9q3 2 6 0l-1 5q-3 2-6 0z" fill="#f7c320" /></svg>
          开始
        </StartButton>
        <FirstTask $look="up" aria-label="server manager">
          <svg width="30" height="32" viewBox="0 0 30 32"><path d="M2 2l8-2 8 2v22H5l-3-2z" fill="#9aa0a4" /><path d="M2 2l6 1v21l-6-2z" fill="#e8eaeb" /><path d="M3 6h5M3 9h5M3 12h5M3 15h5" stroke="#888" /><path d="M10 2h7v13h-7z" fill="#777d81" /><path d="M7 19l12-3 10 4v7l-10 4-12-4z" fill="#8a9094" /><path d="M7 19l12 4v8l-12-4z" fill="#a9aeb2" /><path d="M14 16c1-4 6-3 6 1" fill="none" stroke="#555" strokeWidth="1.500" /><path d="M9 22v3M16 24v3M25 21v3" stroke="#fff" strokeWidth="2" /></svg>
        </FirstTask>
        <Task aria-label="powershell">
          <svg width="28" height="24" viewBox="0 0 28 24"><path d="M6 1h19q2 0 1.600 2l-4 18q-.5 2-2.600 2H3q-2 0-1.600-2L4 3q.4-2 2-2z" fill="#2f7fc4" stroke="#7fb4e2" /><path d="M8 5l8 7-9 6M15 18h6" fill="none" stroke="#fff" strokeWidth="2.500" /></svg>
        </Task>
        <Task aria-label="explorer">
          <svg width="34" height="32" viewBox="0 0 34 32"><path d="M1 4q0-2 2-2h8l2 3h16q3 0 3 3v17H1z" fill="#f2d778" stroke="#c9a644" /><path d="M5 2h6v3H5z" fill="#2da84a" /><path d="M12 5h7v3h-7z" fill="#c84a2a" /><path d="M20 7h8v3h-8z" fill="#2a82d8" /><path d="M2 10h29v14H2z" fill="#f9e79a" /><path d="M7 30V21q0-2 2-2h17q2 0 2 2v9h-5v-5H12v5z" fill="#9fd0f2" stroke="#5b9fd2" /><path d="M4 18h8M8 14v8" stroke="#fff" /></svg>
        </Task>
        <Task $look="down" aria-label="金字塔"><Logo size={32} /></Task>
        <Grow />
        <Tray>
          <svg width="14" height="14" viewBox="0 0 14 14"><circle cx="7" cy="7" r="6.500" fill="#1f87e0" /><path d="M9.500 4.500C8 3 4.500 3.500 5 5.500c.5 1.500 4 1 4 3 0 2-3.500 2-4.500.5" fill="none" stroke="#fff" strokeWidth="1.500" /></svg>
          <TrayNet width="17" height="17" viewBox="0 0 17 17" fill="none"><path d="M5.500 5.500h10v8h-10zM8 15.500h6" stroke="#555" fill="#e8ecec" /><path d="M1 1v4h4V1M3 5v7h2" stroke="#666" strokeWidth="1.500" /></TrayNet>
          <time>10:56<br />2020/4/21</time>
          <svg width="16" height="14" viewBox="0 0 16 14"><path d="M1 1l14-1v9l-14 1z" fill="#1e78c8" stroke="#0a3a6a" /><path d="M2 8l9-6 3-1v4z" fill="#5fb0ea" /><path d="M1 10l14-1v2L2 13z" fill="#333" /></svg>
        </Tray>
      </TaskBar>
      <Dialog role="dialog" aria-labelledby="busy-title">
        <DialogTitle>
          <h2 id="busy-title">服务器正在运行中</h2>
          <DialogClose aria-label="close dialog"><Ex size={8} /></DialogClose>
        </DialogTitle>
        <DialogBody>
          <svg width="32" height="28" viewBox="0 0 32 28">
            <path d="M16 1l15 26H1z" fill="#f7c918" stroke="#9a9a8a" strokeWidth="1.500" strokeLinejoin="round" />
            <path d="M16 3L5 23z" fill="#fff2a0" />
            <path d="M14 8h4l-1 10h-2zM14.500 20h3v3.500h-3z" fill="#222" />
          </svg>
          <p>由于另一个程序正在运行中，此操作无法完<br />成。请选择“切换到”来激活正在运行中的程<br />序，并更正问题。</p>
        </DialogBody>
        <DialogButtons>
          <DialogButton $main>切换到(<u>S</u>)...</DialogButton>
          <DialogButton>重试(<u>R</u>)</DialogButton>
          <DialogButton disabled>取消(<u>C</u>)</DialogButton>
        </DialogButtons>
      </Dialog>
      <Highlight />
    </Window>
  );
}
